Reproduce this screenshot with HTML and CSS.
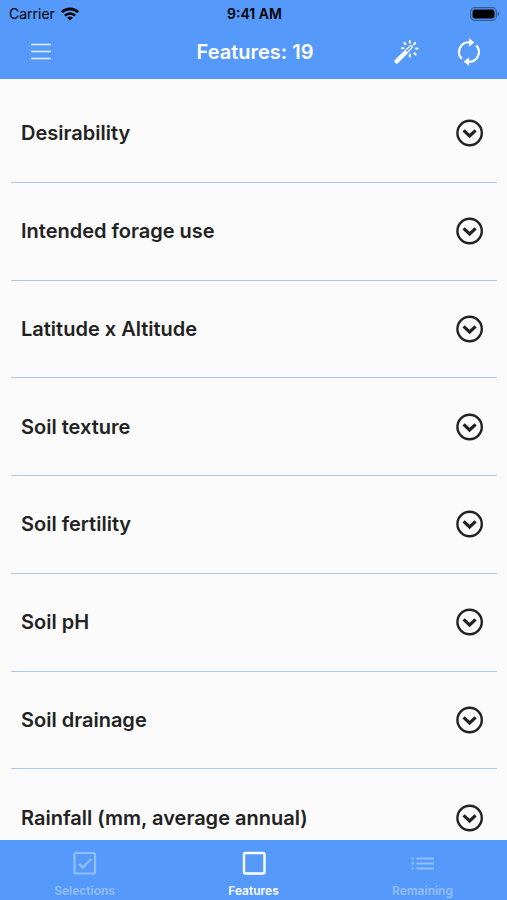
FILE: index.html
```html
<!DOCTYPE html>
<html lang="en">
<head>
<meta charset="utf-8">
<meta name="viewport" content="width=device-width, initial-scale=1">
<title>Features</title>
<link rel="stylesheet" href="styles.css">
</head>
<body>
<svg class="sprite" aria-hidden="true">
  <symbol id="chevron" viewBox="0 0 28 28"><circle cx="13.6" cy="14" r="12.2" fill="none" stroke="currentColor" stroke-width="2.4"/><path d="M7.6 11.4 13.6 17l6-5.6" fill="none" stroke="currentColor" stroke-width="3.2"/></symbol>
</svg>
<header class="top">
  <div class="status">
    <span class="carrier">Carrier
      <svg class="wifi" viewBox="0 0 18 14" aria-hidden="true"><g fill="none" stroke="currentColor" stroke-width="2.6"><path d="M.9 5.2a11.5 11.5 0 0 1 16.2 0"/><path d="M3.9 8.6a7.2 7.2 0 0 1 10.2 0"/></g><path d="M9 13.6 6.2 10.8a4 4 0 0 1 5.6 0z" fill="currentColor"/></svg>
    </span>
    <time class="clock">9:41 AM</time>
    <svg class="battery" viewBox="0 0 30 14" aria-hidden="true"><rect x=".7" y=".7" width="25.6" height="12.6" rx="3.8" fill="none" stroke="#000" stroke-opacity=".4" stroke-width="1.2"/><rect x="2.5" y="2.5" width="22" height="9" rx="2.2"/><path d="M27.7 4.8a2.4 2.4 0 0 1 0 4.4z" fill-opacity=".45"/></svg>
  </div>
  <div class="bar">
    <button class="tool" type="button" aria-label="Menu"><svg viewBox="0 0 28 28"><path d="M4 6.5h20M4 13.5h20M4 20.5h20" fill="none" stroke="currentColor" stroke-opacity=".85" stroke-width="1.6"/></svg></button>
    <h1 class="title">Features: 19</h1>
    <div class="actions">
      <button class="tool" type="button" aria-label="Suggest"><svg viewBox="0 0 28 28"><g fill="none" stroke="currentColor" stroke-linecap="round"><path d="M4.6 23.4 13 15" stroke-width="4.4"/><path d="m12.4 13.4 5.8-5.6q1.5-.9 2 .3t-.5 2l-5.5 5.6" stroke-width="1.3"/><path d="M17.8 3v1.8M12.3 4.8l1.2 1.5M9.8 10.3h1.8M23.2 4.9l-1.2 1.3M24 10.5h1.5M22.5 15.2l1.2 1.3M17.8 16.6v1.8" stroke-width="2"/></g></svg></button>
      <button class="tool" type="button" aria-label="Reset"><svg viewBox="0 0 28 28"><g fill="none" stroke="currentColor" stroke-width="2.2"><path d="M6.9 20.8A9.7 9.7 0 0 1 14.5 4.3"/><path d="M21.1 7.2a9.7 9.7 0 0 1-7.6 16.5"/></g><path d="M13.9 0 19.2 4.4l-5.3 4.4zM14.1 28l-5.3-4.4 5.3-4.4z" fill="currentColor"/></svg></button>
    </div>
  </div>
</header>
<main class="content">
  <ul class="list">
    <li class="item"><button class="row" type="button">Desirability<svg class="chevron"><use href="#chevron"/></svg></button></li>
    <li class="item"><button class="row" type="button">Intended forage use<svg class="chevron"><use href="#chevron"/></svg></button></li>
    <li class="item"><button class="row" type="button">Latitude x Altitude<svg class="chevron"><use href="#chevron"/></svg></button></li>
    <li class="item"><button class="row" type="button">Soil texture<svg class="chevron"><use href="#chevron"/></svg></button></li>
    <li class="item"><button class="row" type="button">Soil fertility<svg class="chevron"><use href="#chevron"/></svg></button></li>
    <li class="item"><button class="row" type="button">Soil pH<svg class="chevron"><use href="#chevron"/></svg></button></li>
    <li class="item"><button class="row" type="button">Soil drainage<svg class="chevron"><use href="#chevron"/></svg></button></li>
    <li class="item"><button class="row" type="button">Rainfall (mm, average annual)<svg class="chevron"><use href="#chevron"/></svg></button></li>
  </ul>
</main>
<nav class="tabs">
  <a class="tab" href="#selections"><svg viewBox="0 0 28 28"><g fill="none" stroke="currentColor" stroke-width="2.2"><rect x="3.5" y="4" width="20.5" height="20.5" rx="1.5"/><path d="m8 14.6 3.8 3.8 8.5-8.7"/></g></svg>Selections</a>
  <a class="tab current" href="#features" aria-current="page"><svg viewBox="0 0 28 28"><rect x="4" y="4" width="20.5" height="20.5" rx="1.5" fill="none" stroke="currentColor" stroke-width="2.4"/></svg>Features</a>
  <a class="tab" href="#remaining"><svg viewBox="0 0 28 28"><path d="M7.5 9.5H25M7.5 14.500H25M7.5 19.5H25M2.500 9.5H5M2.500 14.500H5M2.500 19.5H5" fill="none" stroke="currentColor" stroke-width="2.2"/></svg>Remaining</a>
</nav>
</body>
</html>
```
FILE: styles.css
```css
* {
  box-sizing: border-box;
}

body {
  margin: 0;
  height: 100vh;
  display: flex;
  flex-direction: column;
  background: #fbfbfb;
  color: #222;
  font-family: Inter, "Liberation Sans", sans-serif;
}

button {
  border: 0;
  padding: 0;
  background: none;
  color: inherit;
  font: inherit;
  cursor: pointer;
}

.sprite {
  display: none;
}

.top {
  background: #5599fb;
  color: #fff;
}

.status {
  display: grid;
  grid-template-columns: 1fr auto 1fr;
  align-items: center;
  height: 27px;
  padding: 0 7px 0 9px;
  color: #000;
  font-size: 14px;
}

.carrier {
  display: flex;
  align-items: center;
  gap: 6px;
}

.wifi {
  width: 18px;
  height: 14px;
}

.clock {
  font-size: 14px;
  font-weight: 600;
}

.battery {
  justify-self: end;
  width: 30px;
  height: 14px;
}

.bar {
  display: grid;
  grid-template-columns: 1fr auto 1fr;
  align-items: center;
  height: 52px;
  padding: 0 24px 3px 27px;
}

.title {
  margin: 0;
  font-size: 20px;
  font-weight: 600;
}

.actions {
  display: flex;
  justify-content: flex-end;
  gap: 35px;
}

.tool {
  width: 28px;
  height: 28px;
}

.tool svg {
  display: block;
}

.content {
  flex: 1;
  min-height: 0;
  overflow-y: auto;
  scrollbar-width: none;
}

.list {
  display: grid;
  grid-auto-rows: 1fr;
  height: calc(100% + 21px);
  margin: 6px 10px 0 11px;
  padding: 0;
  list-style: none;
}

.item {
  border-bottom: 1px solid #a9c8f8;
}

.row {
  display: flex;
  align-items: center;
  justify-content: space-between;
  width: 100%;
  height: 100%;
  padding: 0 13px 0 10px;
  font-size: 20px;
  font-weight: 600;
  text-align: left;
}

.chevron {
  width: 28px;
  height: 28px;
}

.tabs {
  display: grid;
  grid-template-columns: repeat(3, 1fr);
  height: 60px;
  background: #5599fb;
}

.tab {
  display: flex;
  flex-direction: column;
  align-items: center;
  gap: 6px;
  padding-top: 9px;
  color: #94bffd;
  font-size: 12px;
  font-weight: 600;
  line-height: 16px;
  text-decoration: none;
}

.tab svg {
  width: 28px;
  height: 28px;
}

.current {
  color: #fff;
}
```
